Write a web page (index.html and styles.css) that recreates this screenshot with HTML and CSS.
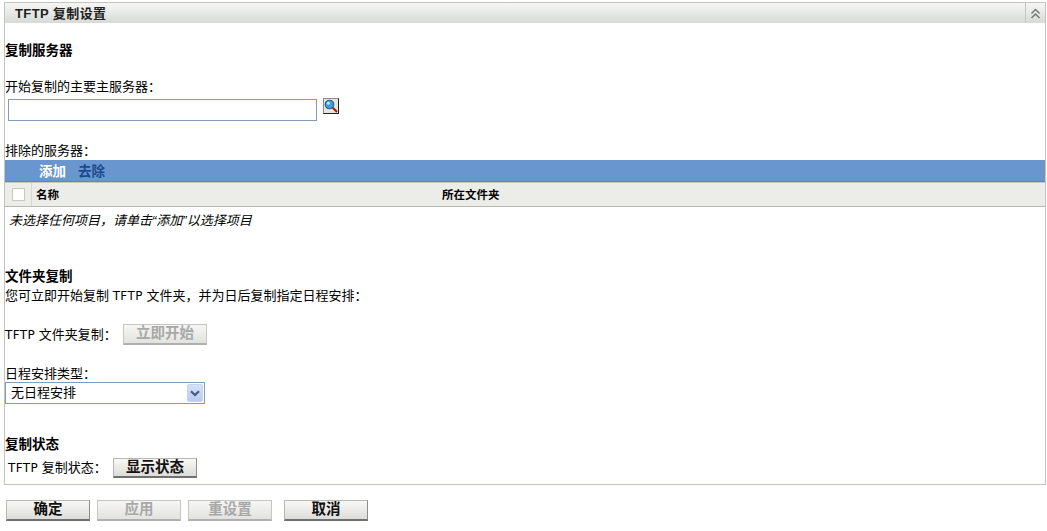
FILE: index.html
```html
<!DOCTYPE html>
<html lang="zh">
<head>
<meta charset="utf-8">
<title>TFTP 复制设置</title>
<link rel="stylesheet" href="styles.css">
</head>
<body>
<section class="panel">
  <header class="panel-head">
    <h1 class="panel-title">TFTP 复制设置</h1>
    <div class="collapse">
      <svg width="11" height="11" viewBox="0 0 11 11" fill="none" stroke="#777" stroke-width="1.5"><path d="M1.5 5.5 5.5 1.5 9.5 5.5"/><path d="M1.5 10 5.5 6 9.5 10"/></svg>
    </div>
  </header>
  <div class="panel-body">
    <h2 class="heading h-server">复制服务器</h2>
    <div class="label l-primary">开始复制的主要主服务器：</div>
    <div class="search-row">
      <input class="text-input" type="text">
      <span class="search-btn">
        <svg width="14" height="14" viewBox="0 0 14 14"><circle cx="5.5" cy="5.5" r="4.3" fill="#3f9be0" stroke="#1c5f94" stroke-width="1.1"/><circle cx="4.4" cy="4.2" r="1.6" fill="#bfe3fb"/><path d="M8.8 8.8 13 13" stroke="#b01414" stroke-width="2"/></svg>
      </span>
    </div>
    <div class="label l-excluded">排除的服务器：</div>
    <div class="toolbar"><span class="tool-add">添加</span><span class="tool-remove">去除</span></div>
    <div class="table-head">
      <div class="check-cell"><span class="check"></span></div>
      <div class="col-name">名称</div>
      <div class="col-folder">所在文件夹</div>
    </div>
    <div class="empty">未选择任何项目，请单击“添加”以选择项目</div>
    <h2 class="heading h-folder">文件夹复制</h2>
    <div class="label l-desc">您可立即开始复制 <span class="latin">TFTP</span> 文件夹，并为日后复制指定日程安排：</div>
    <div class="row r-start"><span class="row-label"><span class="latin">TFTP</span> 文件夹复制：</span><span class="btn disabled b-start">立即开始</span></div>
    <div class="label l-type">日程安排类型：</div>
    <div class="select"><span>无日程安排</span><span class="select-arrow"><svg width="10" height="7" viewBox="0 0 10 7" fill="none" stroke="#46597c" stroke-width="2.2"><path d="M1 1.2 5 5 9 1.2"/></svg></span></div>
    <h2 class="heading h-status">复制状态</h2>
    <div class="row r-status"><span class="row-label status-label"><span class="latin">TFTP</span> 复制状态：</span><span class="btn b-show">显示状态</span></div>
  </div>
</section>
<footer class="actions">
  <span class="btn action">确定</span>
  <span class="btn action disabled">应用</span>
  <span class="btn action disabled">重设置</span>
  <span class="btn action cancel">取消</span>
</footer>
</body>
</html>
```
FILE: styles.css
```css
* { box-sizing: border-box; }
html, body { margin: 0; padding: 0; }
body {
  background: #fff;
  color: #000;
  font: 13px/16px "Liberation Sans", "Noto Sans CJK SC", sans-serif;
  width: 1047px;
  height: 531px;
  overflow: hidden;
  padding: 2px 1px 0 4px;
}
.latin {
  font-family: "DejaVu Sans", sans-serif;
  font-size: 12px;
  letter-spacing: .4px;
}
.panel {
  border: 1px solid #c4c4bf;
  height: 483px;
}
.panel-head {
  display: flex;
  height: 20px;
  background: linear-gradient(#f6f7f5, #d8dad6);
  justify-content: space-between;
}
.panel-title {
  margin: 0;
  padding-left: 10px;
  font-size: 13px;
  line-height: 21px;
  font-weight: 700;
  color: #222;
  letter-spacing: .4px;
}
.collapse {
  width: 20px;
  border-left: 1px solid #c4c4bf;
  display: flex;
  align-items: center;
  justify-content: center;
}
.panel-body { display: flex; flex-direction: column; align-items: flex-start; }
.heading { margin: 0; font-size: 13.5px; line-height: 16px; font-weight: 700; }
.label { line-height: 16px; }
.h-server { margin-top: 20px; }
.l-primary { margin-top: 20px; }
.search-row { display: flex; align-items: flex-start; margin: 4px 0 0 3px; }
.text-input {
  width: 309px;
  height: 22px;
  border: 1px solid #7f9db9;
  background: #fff;
  margin: 0;
  padding: 0;
}
.search-btn {
  width: 16px;
  height: 16px;
  margin: -1px 0 0 6px;
  border: 1px solid #222;
  border-top-color: #8a8a8a;
  border-left-color: #8a8a8a;
  background: #e8e6da;
  display: flex;
  align-items: center;
  justify-content: center;
}
.l-excluded { margin-top: 22px; }
.toolbar {
  width: 100%;
  height: 22px;
  margin-top: 1px;
  background: #6996cf;
  border-bottom: 1px solid #5c86bd;
  padding-left: 34px;
  font-weight: 700;
  font-size: 13.5px;
  line-height: 23px;
  display: flex;
  gap: 12px;
}
.tool-add { color: #fff; }
.tool-remove { color: #1d4a8f; }
.table-head {
  width: 100%;
  height: 25px;
  display: flex;
  align-items: center;
  background: #ecece9;
  border-top: 1px solid #c8c8c4;
  border-bottom: 1px solid #b8b8b0;
  font-size: 11.5px;
  font-weight: 700;
}
.check-cell {
  width: 27px;
  height: 100%;
  border-right: 1px solid #d8d8d2;
  display: flex;
  align-items: center;
  justify-content: center;
}
.check { width: 13px; height: 13px; background: #fff; border: 1px solid #c8cabb; }
.col-name { width: 410px; padding-left: 4px; }
.col-folder { flex: 1; padding-left: 0; }
.empty {
  font-style: italic;
  font-size: 13px;
  padding-left: 4px;
  margin-top: 6px;
}
.h-folder { margin-top: 40px; }
.l-desc { margin-top: 3px; }
.row { display: flex; align-items: center; }
.r-start { margin-top: 20px; }
.row-label { width: 118px; }
.btn {
  display: inline-block;
  width: 84px;
  height: 21px;
  text-align: center;
  font-size: 14.5px;
  line-height: 17px;
  font-weight: 700;
  color: #111;
  border: 1px solid #b9b9b4;
  border-bottom: 2px solid #707070;
  border-right-color: #8c8c88;
  background: linear-gradient(#f8f8f6, #dcdcd8);
}
.btn.disabled {
  color: #a8a8a8;
  border-color: #c6c6c2;
  border-bottom-color: #b0b0ac;
  background: linear-gradient(#f6f6f4, #e2e2de);
}
.l-type { margin-top: 21px; }
.select {
  width: 200px;
  height: 22px;
  border: 1px solid #7f9db9;
  display: flex;
  justify-content: space-between;
  align-items: center;
  padding: 0 1px 0 5px;
}
.select-arrow {
  width: 16px;
  height: 18px;
  background: linear-gradient(#d5e1f9, #b9cbf1);
  border: 1px solid #c7d4ec;
  border-radius: 2px;
  display: flex;
  align-items: center;
  justify-content: center;
}
.h-status { margin-top: 33px; }
.r-status { margin-top: 5px; }
.status-label { width: 108px; padding-left: 3px; }
.b-show { height: 20px; }
.actions {
  display: flex;
  margin-top: 15px;
  padding-left: 2px;
  gap: 7px;
}
.action { height: 21px; }
.cancel { margin-left: 5px; }
```
